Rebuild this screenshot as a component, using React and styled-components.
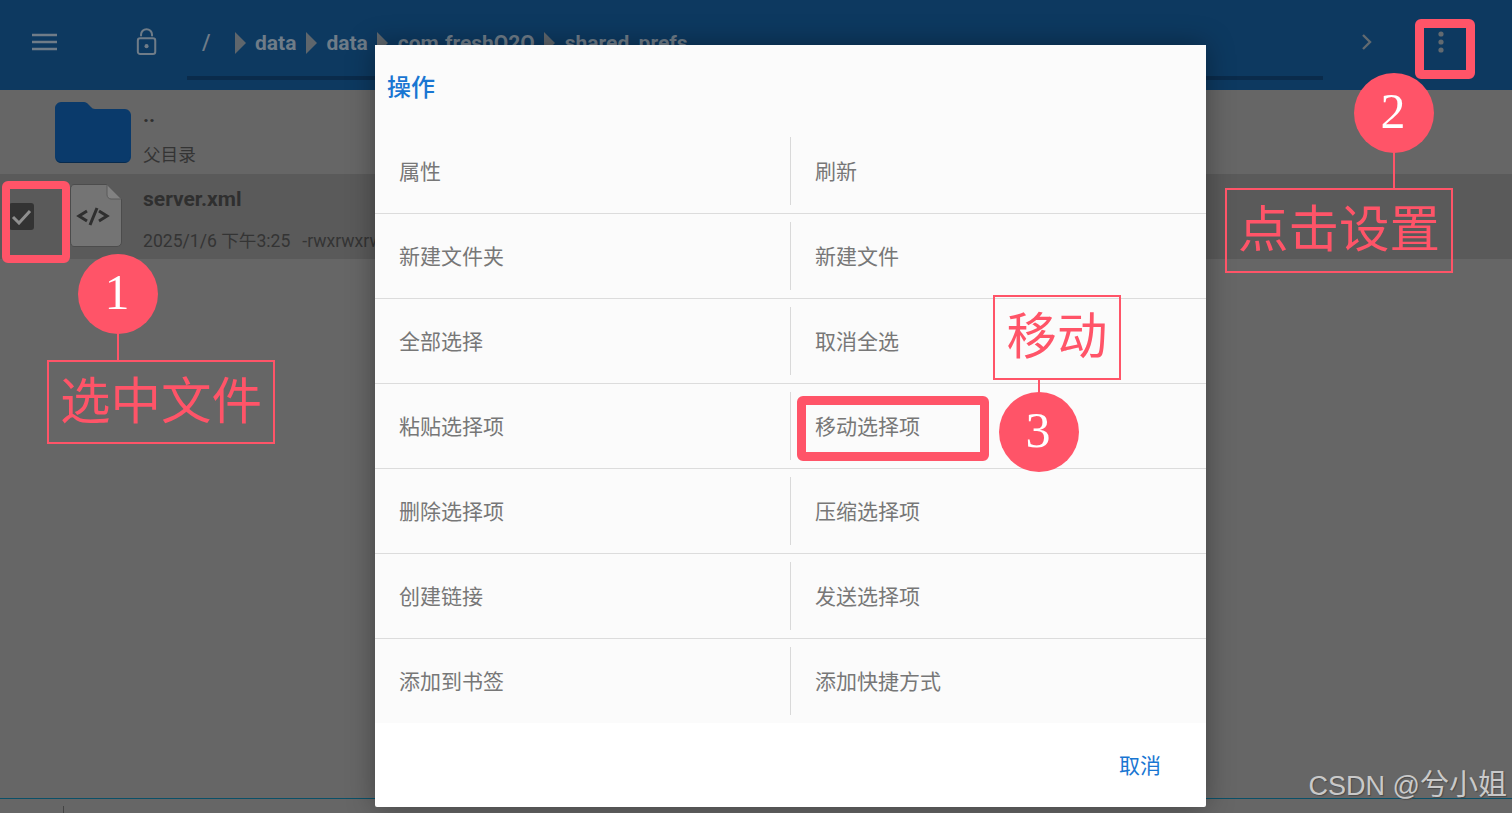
import React from 'react'
import styled, { createGlobalStyle } from 'styled-components'

const ACCENT = '#ff5468'
const CJK = `Roboto, 'Noto Sans CJK SC', sans-serif`

const actions = [
  ['属性', '刷新'],
  ['新建文件夹', '新建文件'],
  ['全部选择', '取消全选'],
  ['粘贴选择项', '移动选择项'],
  ['删除选择项', '压缩选择项'],
  ['创建链接', '发送选择项'],
  ['添加到书签', '添加快捷方式'],
]

const crumbs = ['data', 'data', 'com.freshO2O', 'shared_prefs']

const GlobalStyle = createGlobalStyle`
  html, body {
    margin: 0;
    padding: 0;
    background: #666666;
    overflow: hidden;
  }
  * { box-sizing: border-box; }
`

const Page = styled.div`
  position: relative;
  width: 1512px;
  height: 813px;
  display: flex;
  flex-direction: column;
  overflow: hidden;
  background: #666666;
  font-family: ${CJK};
`

const Header = styled.header`
  height: 90px;
  flex: none;
  display: flex;
  align-items: flex-start;
  background: #0d3960;
  padding: 28px 0 0 32px;
`

const IconSlot = styled.div`
  width: ${p => p.$width}px;
  height: 28px;
  flex: none;
  display: flex;
  align-items: center;
  color: #6f7c88;
`

const PathArea = styled.div`
  width: 1136px;
  height: 52px;
  flex: none;
  margin-left: 29px;
  border-bottom: 4px solid #0a2b4b;
  display: flex;
  align-items: flex-start;
  gap: 9.5px;
  overflow: hidden;
`

const RootSlash = styled.span`
  width: 23px;
  margin-left: 15px;
  flex: none;
  font-size: 22px;
  line-height: 30px;
  font-weight: 500;
  color: #6f7c88;
`

const Crumb = styled.span`
  font-size: 21px;
  line-height: 30px;
  font-weight: 700;
  color: #6f7c88;
  white-space: nowrap;
`

const CrumbArrow = styled.span`
  width: 0;
  height: 0;
  flex: none;
  margin-top: 4px;
  border-left: 11px solid #5f666c;
  border-top: 11px solid transparent;
  border-bottom: 11px solid transparent;
`

const HeaderActions = styled.div`
  height: 28px;
  flex: none;
  margin-left: 38px;
  color: #626a70;
  display: flex;
  align-items: center;
  gap: 65px;
`

const FileList = styled.main`
  flex: 1;
  display: flex;
  flex-direction: column;
`

const FileRow = styled.div`
  height: ${p => p.$height}px;
  display: flex;
  align-items: flex-start;
  background: ${p => (p.$selected ? '#5a5a5a' : 'transparent')};
`

const Leading = styled.div`
  width: 143px;
  flex: none;
  display: flex;
  align-items: flex-start;
  padding: ${p => p.$pad};
`

const CheckBox = styled.div`
  width: 25px;
  height: 27px;
  margin: 19px 36px 0 9px;
  flex: none;
  border-radius: 3px;
  background: #333333;
  display: flex;
  align-items: center;
  justify-content: center;
`

const FileText = styled.div`
  display: flex;
  flex-direction: column;
  white-space: nowrap;
  padding-top: ${p => p.$top}px;
  gap: ${p => p.$gap}px;
`

const FileName = styled.div`
  font-size: 21px;
  line-height: 26px;
  font-weight: 700;
  color: #2f2f2f;
`

const FileMeta = styled.div`
  font-size: 17.6px;
  line-height: 26px;
  color: #343434;
`

const Permissions = styled.span`
  margin-left: 12px;
`

const StatusBar = styled.footer`
  height: 15px;
  flex: none;
  border-top: 1px solid #0a5068;
  padding: 7px 0 0 63px;
`

const StatusTick = styled.div`
  width: 1px;
  height: 7px;
  background: #444444;
`

const Dialog = styled.section`
  position: absolute;
  left: 375px;
  top: 45px;
  width: 831px;
  height: 762px;
  background: #ffffff;
  border-radius: 2px;
  box-shadow: 0 0 28px rgba(0, 0, 0, 0.35);
  display: flex;
  flex-direction: column;
`

const DialogTitle = styled.h2`
  height: 84px;
  margin: 0;
  padding: 25px 0 0 12px;
  flex: none;
  background: #fbfbfb;
  color: #1976d2;
  font-size: 24px;
  line-height: 36px;
  font-weight: 500;
`

const ActionGrid = styled.div`
  display: grid;
  grid-template-columns: 415px 416px;
  grid-template-rows: repeat(6, 85px) 84px;
  background: #fbfbfb;
`

const ActionCell = styled.div`
  display: flex;
  align-items: center;
  padding: 0 0 2px ${p => (p.$right ? 25 : 24)}px;
  font-size: 21px;
  color: #777777;
  position: relative;
  border-bottom: ${p => (p.$last ? 'none' : '1px solid #dcdcdc')};

  ${p =>
    p.$right &&
    `&::before {
      content: '';
      position: absolute;
      left: 0;
      top: 8px;
      bottom: 8px;
      width: 1px;
      background: #d9d9d9;
    }`}
`

const DialogActions = styled.div`
  flex: 1;
  display: flex;
  justify-content: flex-end;
  align-items: flex-start;
  padding: 26px 45px 0 0;
`

const CancelButton = styled.span`
  font-size: 21px;
  line-height: 34px;
  color: #1976d2;
`

const Highlight = styled.div`
  position: absolute;
  left: ${p => p.$x}px;
  top: ${p => p.$y}px;
  width: ${p => p.$w}px;
  height: ${p => p.$h}px;
  border: ${p => p.$stroke || 9}px solid ${ACCENT};
  border-radius: 6px;
`

const Badge = styled.div`
  position: absolute;
  left: ${p => p.$x}px;
  top: ${p => p.$y}px;
  width: 80px;
  height: 80px;
  padding: 0 2px 4px 0;
  border-radius: 50%;
  background: ${ACCENT};
  color: #ffffff;
  display: flex;
  align-items: center;
  justify-content: center;
  font-family: 'Liberation Serif', serif;
  font-size: 50px;
  line-height: 1;
`

const Connector = styled.div`
  position: absolute;
  left: ${p => p.$x}px;
  top: ${p => p.$y}px;
  width: 2px;
  height: ${p => p.$h}px;
  background: ${ACCENT};
`

const Callout = styled.div`
  position: absolute;
  left: ${p => p.$x}px;
  top: ${p => p.$y}px;
  width: ${p => p.$w}px;
  height: ${p => p.$h}px;
  padding-bottom: 10px;
  border: 2px solid ${ACCENT};
  color: ${ACCENT};
  display: flex;
  align-items: center;
  justify-content: center;
  font-family: 'Noto Sans CJK SC', sans-serif;
  font-size: 50.5px;
  line-height: 1;
  white-space: nowrap;
`

const Watermark = styled.div`
  position: absolute;
  right: 5px;
  top: 765px;
  font-family: 'Liberation Sans', 'Noto Sans CJK SC', sans-serif;
  font-size: 27px;
  line-height: 40px;
  color: #c9c9c9;
  text-shadow: 1px 1px 1px #4a4a4a;
  white-space: nowrap;
`

const WatermarkName = styled.span`
  font-size: 29px;
`

const MenuIcon = () => (
  <svg width="26" height="18" viewBox="0 0 26 18">
    <path d="M0 2h25M0 9h25M0 16h25" stroke="currentColor" strokeWidth="2.4" fill="none" />
  </svg>
)

const LockIcon = () => (
  <svg width="24" height="30" viewBox="0 0 24 30" fill="none" stroke="currentColor" strokeWidth="2.2">
    <path d="M5.500 8V7a6 6 0 0 1 12 0v1" strokeLinecap="round" />
    <rect x="2" y="11" width="19" height="17" rx="2.5" />
    <circle cx="11.500" cy="19.500" r="2.2" fill="currentColor" stroke="none" />
  </svg>
)

const ChevronIcon = () => (
  <svg width="12" height="18" viewBox="0 0 12 18">
    <path d="M2 2l7 7-7 7" stroke="currentColor" strokeWidth="2.4" fill="none" />
  </svg>
)

const DotsIcon = () => (
  <svg width="6" height="22" viewBox="0 0 6 22" fill="currentColor">
    <circle cx="3" cy="3" r="2.6" />
    <circle cx="3" cy="11" r="2.6" />
    <circle cx="3" cy="19" r="2.6" />
  </svg>
)

const FolderIcon = () => (
  <svg width="76" height="62" viewBox="0 0 76 62">
    <path
      d="M6 0h23c2 0 3 1 4 2l3 3c1 1 2 2 4 2h30c3 0 6 3 6 6v42c0 3-3 6-6 6H6c-3 0-6-3-6-6V6c0-3 3-6 6-6z"
      fill="#0a3a6b"
    />
    <path d="M1 56c1 3 3 4 5 4h64c2 0 4-1 5-4v-1c0 3-3 6-6 6H7c-3 0-6-2-6-5z" fill="#072a4d" />
  </svg>
)

const CodeFileIcon = () => (
  <svg width="52" height="63" viewBox="0 0 52 63">
    <path
      d="M4 .5h33L51.500 15v43c0 2.500-2 4.500-4.500 4.500H4C2 62.500.5 60.500.5 58V5C.5 2.500 2 .5 4 .5z"
      fill="#747474"
      stroke="#4c4c4c"
    />
    <path d="M37 .5V11c0 2 2 4 4 4h10.500z" fill="#828282" stroke="#5a5a5a" />
    <path
      d="M17 27l-8 5 8 5M29 27l8 5-8 5M27 24l-7 17"
      stroke="#2f2f2f"
      strokeWidth="3"
      fill="none"
    />
  </svg>
)

const CheckIcon = () => (
  <svg width="21" height="16" viewBox="0 0 21 16">
    <path d="M2 8l6 6L19 2" stroke="#8f8f8f" strokeWidth="3" fill="none" />
  </svg>
)

const App = () => (
  <Page>
    <GlobalStyle />
    <Header>
      <IconSlot $width={104}>
        <MenuIcon />
      </IconSlot>
      <IconSlot $width={22}>
        <LockIcon />
      </IconSlot>
      <PathArea>
        <RootSlash>/</RootSlash>
        {crumbs.map((crumb, i) => (
          <React.Fragment key={i}>
            <CrumbArrow />
            <Crumb>{crumb}</Crumb>
          </React.Fragment>
        ))}
      </PathArea>
      <HeaderActions>
        <ChevronIcon />
        <DotsIcon />
      </HeaderActions>
    </Header>

    <FileList>
      <FileRow $height={84}>
        <Leading $pad="12px 0 0 55px">
          <FolderIcon />
        </Leading>
        <FileText $top={12} $gap={14}>
          <FileName>..</FileName>
          <FileMeta>父目录</FileMeta>
        </FileText>
      </FileRow>
      <FileRow $height={85} $selected>
        <Leading $pad="10px 0 0 0">
          <CheckBox>
            <CheckIcon />
          </CheckBox>
          <CodeFileIcon />
        </Leading>
        <FileText $top={12} $gap={16}>
          <FileName>server.xml</FileName>
          <FileMeta>
            2025/1/6 下午3:25<Permissions>-rwxrwxrwx</Permissions>
          </FileMeta>
        </FileText>
      </FileRow>
    </FileList>

    <StatusBar>
      <StatusTick />
    </StatusBar>

    <Dialog>
      <DialogTitle>操作</DialogTitle>
      <ActionGrid>
        {actions.map((pair, row) =>
          pair.map((label, col) => (
            <ActionCell key={label} $right={col === 1} $last={row === actions.length - 1}>
              {label}
            </ActionCell>
          ))
        )}
      </ActionGrid>
      <DialogActions>
        <CancelButton>取消</CancelButton>
      </DialogActions>
    </Dialog>

    <Highlight $x={2} $y={181} $w={68} $h={82} $stroke={8} />
    <Connector $x={117} $y={330} $h={32} />
    <Badge $x={78} $y={254}>1</Badge>
    <Callout $x={47} $y={360} $w={228} $h={84}>选中文件</Callout>

    <Highlight $x={1415} $y={19} $w={60} $h={60} />
    <Connector $x={1393} $y={150} $h={40} />
    <Badge $x={1354} $y={73}>2</Badge>
    <Callout $x={1225} $y={188} $w={228} $h={85}>点击设置</Callout>

    <Highlight $x={797} $y={396} $w={192} $h={65} />
    <Connector $x={1038} $y={378} $h={16} />
    <Badge $x={999} $y={392}>3</Badge>
    <Callout $x={993} $y={295} $w={128} $h={85}>移动</Callout>

    <Watermark>
      CSDN @<WatermarkName>兮小姐</WatermarkName>
    </Watermark>
  </Page>
)

export default App
